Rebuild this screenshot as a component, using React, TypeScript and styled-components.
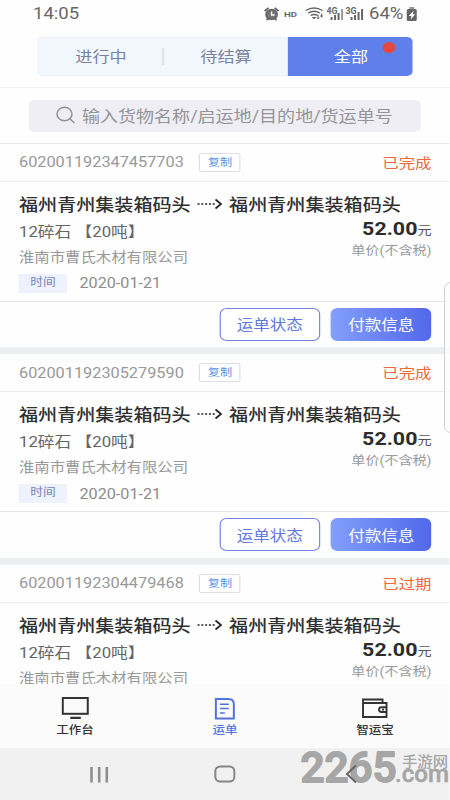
import React from "react";
import styled, { createGlobalStyle } from "styled-components";

const STRETCH = 1.156;
const x = (px: number) => `${(px / STRETCH).toFixed(3)}px`;

const Global = createGlobalStyle`
  *, *::before, *::after { box-sizing: border-box; }
  html, body { margin: 0; padding: 0; background: #fff; overflow: hidden; }
  body { font-family: Roboto, "Noto Sans CJK SC", sans-serif; color: #333; }
`;

const Frame = styled.div`
  position: relative;
  width: 450px;
  height: 800px;
  overflow: hidden;
  background: #fefefe;
`;

const Screen = styled.div`
  width: ${x(450)};
  height: 800px;
  display: flex;
  flex-direction: column;
  transform: scaleX(${STRETCH});
  transform-origin: 0 0;
  white-space: nowrap;
`;

const StatusBar = styled.header`
  height: 27px;
  flex: none;
  display: flex;
  justify-content: space-between;
  align-items: center;
  padding: 0 ${x(32)} 0 ${x(33)};
  font-size: 16px;
  line-height: 28px;
  color: #666;
`;

const StatusIcons = styled.div`
  display: flex;
  align-items: center;
  height: 27px;
`;

const Percent = styled.span`
  width: ${x(37)};
  margin-left: ${x(3)};
`;

const TabArea = styled.div`
  height: 61px;
  flex: none;
  padding: 10px ${x(37.5)} 0;
  border-bottom: 1px solid #eeeff1;
`;

const Tabs = styled.nav`
  display: flex;
  height: 39px;
  border-radius: 5px;
  overflow: hidden;
  background: #f2f7fe;
`;

const Tab = styled.button<{ $active?: boolean; $divided?: boolean }>`
  position: relative;
  flex: 1;
  padding: 0 0 2px ${x(2)};
  border: ${(p) => (p.$active ? "0" : "1px solid #ebf0fa")};
  border-width: ${(p) => (p.$active ? "0" : "1px 0")};
  background: ${(p) => (p.$active ? "#5f80ea" : "transparent")};
  color: ${(p) => (p.$active ? "#fff" : "#7b819b")};
  font: inherit;
  font-size: 14.8px;
  &::after {
    content: "";
    display: ${(p) => (p.$divided ? "block" : "none")};
    position: absolute;
    right: -1px;
    top: 10px;
    width: 1.5px;
    height: 17px;
    background: #dfe3ea;
  }
`;

const Dot = styled.i`
  position: absolute;
  top: 5px;
  right: ${x(17.5)};
  width: 11px;
  height: 11px;
  border-radius: 50%;
  background: #e5483f;
`;

const SearchArea = styled.div`
  height: 55.5px;
  flex: none;
  padding: 11.5px ${x(29)} 0;
  border-bottom: 1px solid #e3e9ee;
`;

const SearchBox = styled.div`
  height: 32.5px;
  border-radius: 5px;
  background: #efeef4;
  display: flex;
  align-items: center;
  padding: 0 0 1px ${x(27)};
  gap: ${x(6)};
  color: #949499;
  font-size: 15.6px;
`;

const List = styled.main`
  height: 540.5px;
  flex: none;
  overflow: hidden;
`;

const Card = styled.article`
  height: 210.5px;
  border-bottom: 7px solid #eceff2;
`;

const CardHead = styled.div`
  height: 38px;
  border-bottom: 1.5px solid #ebebed;
  display: flex;
  align-items: center;
  padding: 0 ${x(18.5)} 0 ${x(19)};
`;

const OrderNo = styled.span`
  width: ${x(180)};
  font-size: 14.1px;
  color: #999;
`;

const CopyButton = styled.button`
  width: ${x(42)};
  height: 19px;
  padding: 0;
  border: 1px solid #dddfe4;
  border-radius: 2px;
  background: #fff;
  color: #5790e8;
  font: inherit;
  font-size: 10.5px;
  line-height: 17px;
`;

const OrderState = styled.span`
  margin-left: auto;
  padding-bottom: 1px;
  font-size: 14.2px;
  color: #eb6b3d;
`;

const CardBody = styled.div`
  height: 120px;
  padding: 11px ${x(18.5)} 0 ${x(19)};
  border-bottom: 1px solid #e7e7ea;
`;

const Route = styled.div`
  height: 24px;
  padding-bottom: 2px;
  display: flex;
  align-items: center;
  font-size: 16.5px;
  font-weight: 500;
  color: #303030;
`;

const RouteArrow = styled.svg`
  margin: 0 ${x(6.5)} 0 ${x(6)};
  flex: none;
`;

const Columns = styled.div`
  display: flex;
  justify-content: space-between;
`;

const Details = styled.div`
  display: flex;
  flex-direction: column;
`;

const Goods = styled.div`
  height: 30px;
  line-height: 32px;
  font-size: 14.5px;
  color: #666;
`;

const Company = styled.div`
  height: 25px;
  line-height: 22px;
  font-size: 13.3px;
  color: #999;
`;

const TimeRow = styled.div`
  height: 23px;
  display: flex;
  align-items: center;
  font-size: 14px;
  color: #8d8d8d;
`;

const TimeTag = styled.span`
  width: ${x(48)};
  height: 19px;
  margin-right: ${x(12.5)};
  background: #eef2fd;
  color: #7784b4;
  font-size: 11px;
  line-height: 18px;
  text-align: center;
`;

const Pricing = styled.div`
  text-align: right;
`;

const Price = styled.div`
  height: 24px;
  line-height: 25px;
  font-size: 12.2px;
  color: #555;
  b {
    font-size: 18.5px;
    color: #2c2c2c;
  }
`;

const PriceNote = styled.div`
  height: 20px;
  line-height: 20px;
  font-size: 12.2px;
  color: #999;
`;

const Actions = styled.footer`
  height: 45.5px;
  display: flex;
  justify-content: flex-end;
  gap: ${x(11)};
  padding: 6px ${x(18.5)} 0;
`;

const Action = styled.button<{ $primary?: boolean }>`
  width: ${x(100.5)};
  height: 33px;
  padding: 0 0 1px;
  border: ${(p) => (p.$primary ? "0" : "1.4px solid #7385df")};
  border-radius: 6px;
  background: ${(p) => (p.$primary ? "linear-gradient(90deg, #839ffb, #5268ea)" : "#fff")};
  color: ${(p) => (p.$primary ? "#fff" : "#6377dc")};
  font: inherit;
  font-size: 14.3px;
`;

const BottomNav = styled.nav`
  height: 64px;
  flex: none;
  display: grid;
  grid-template-columns: repeat(3, 1fr);
  background: #fbfbfb;
`;

const NavItem = styled.div<{ $active?: boolean }>`
  display: flex;
  flex-direction: column;
  align-items: center;
  padding-top: 12px;
  font-size: 10.8px;
  line-height: 20px;
  font-weight: 500;
  color: ${(p) => (p.$active ? "#5570df" : "#333")};
  svg {
    height: 25px;
    flex: none;
  }
`;

const SystemBar = styled.div`
  height: 52px;
  flex: none;
  background: #f1f1f1;
  display: grid;
  grid-template-columns: ${x(198)} ${x(54)} ${x(198)};
  justify-items: center;
  align-items: center;
`;

const SideHandle = styled.div`
  position: absolute;
  left: 443.5px;
  top: 282px;
  width: 20px;
  height: 151px;
  border: 1.5px solid #d0d0d0;
  border-radius: 7px;
  background: rgba(252, 252, 252, 0.75);
`;

const Watermark = styled.svg`
  position: absolute;
  left: 295px;
  top: 744px;
`;

const stretched = { preserveAspectRatio: "none", fill: "none" } as const;

const StatusGlyphs = () => (
  <svg {...stretched} width={x(102)} height="18" viewBox="264 4 102 18" stroke="#666">
    <ellipse cx="272" cy="13.4" rx="5.4" ry="4.600" fill="#777" strokeWidth="2" />
    <path d="M265 10l4-3M279 10l-4-3M267 19l2-2M277 19l-2-2" strokeWidth="1.8" />
    <path d="M272 10.5v3.5h3" stroke="#fff" strokeWidth="1.3" />
    <text x="284.5" y="15.800" fontSize="8" fontWeight="700" textLength="13" lengthAdjust="spacingAndGlyphs" fill="#666" stroke="none">HD</text>
    <path d="M306 9.5q8.5-5 17 0M308.5 12q6-3.5 12 0M311 14.500q3.500-2 7 0" strokeWidth="1.4" />
    <path d="M313 16.500h3l-1.500 1.500zM318.500 13.500v4.500M317 16.500l1.500 1.500 1.500-1.500M322 12.500v4M320.500 15h3" strokeWidth="1" />
    <text x="327" y="12.800" fontSize="8.500" fontWeight="700" textLength="11" lengthAdjust="spacingAndGlyphs" fill="#666" stroke="none">4G</text>
    <text x="346" y="12.800" fontSize="8.500" fontWeight="700" textLength="11" lengthAdjust="spacingAndGlyphs" fill="#666" stroke="none">3G</text>
    <path d="M332 19v-3M335.500 19v-5M339 19v-7M352 19v-3M355.500 19v-5M359 19v-8M362.500 19V8" strokeWidth="2" />
    <path d="M342.500 19V8" stroke="#999" strokeWidth="2" />
  </svg>
);

const BatteryGlyph = () => (
  <svg {...stretched} width={x(12)} height="14" viewBox="0 0 12 14">
    <path d="M3.500 0h5v2h-5z" fill="#999" />
    <rect x="1" y="2" width="10" height="12" rx="1.500" fill="#666" />
    <path d="M8 3.500L3 9h2.600l-.6 3.500 4.500-5.200H7z" fill="#fff" />
  </svg>
);

const SearchGlyph = () => (
  <svg {...stretched} width={x(20)} height="18" viewBox="0 0 20 18" stroke="#919196" strokeWidth="1.500">
    <ellipse cx="9" cy="8" rx="7.500" ry="6.800" />
    <path d="M14.300 12.800L19 17" />
  </svg>
);

const MonitorGlyph = () => (
  <svg {...stretched} width={x(28)} height="25" viewBox="0 0 28 25">
    <rect x="1.500" y="2" width="25" height="15.800" stroke="#333" strokeWidth="2" />
    <path d="M9 21.900h10.500" stroke="#333" strokeWidth="2.200" />
  </svg>
);

const WaybillGlyph = () => (
  <svg {...stretched} width={x(22)} height="25" viewBox="0 0 22 25" stroke="#5570df">
    <path d="M2 3h12.500q5.500 0 5.500 5v14.500H2z" strokeWidth="2" />
    <path d="M6 8.300h9M6 12.500h9M6 17h5" strokeWidth="1.600" />
  </svg>
);

const WalletGlyph = () => (
  <svg {...stretched} width={x(26)} height="25" viewBox="0.8 0 26 25" stroke="#333" strokeWidth="1.900">
    <path d="M21.500 6.500V3.500H2V21h23.500V7H2" />
    <path d="M25.500 11.200h-5q-2.500 0-2.500 2.400t2.500 2.400h5M21 13.600h2" />
  </svg>
);

const RecentsGlyph = () => (
  <svg {...stretched} width={x(20)} height="17" viewBox="0 0 20 17" stroke="#8e8e8e" strokeWidth="2.600">
    <path d="M2.500 1v15.500M10.200 1v15.500M17.800 1v15.500" />
  </svg>
);

const HomeGlyph = () => (
  <svg {...stretched} width={x(22)} height="18" viewBox="0 0 22 18">
    <rect x="1.500" y="1.500" width="19" height="15" rx="5" ry="4.500" stroke="#858585" strokeWidth="2" />
  </svg>
);

const orders = [
  { no: "602001192347457703", state: "已完成" },
  { no: "602001192305279590", state: "已完成" },
  { no: "602001192304479468", state: "已过期" },
];

const OrderCard = ({ no, state }: { no: string; state: string }) => (
  <Card>
    <CardHead>
      <OrderNo>{no}</OrderNo>
      <CopyButton>复制</CopyButton>
      <OrderState>{state}</OrderState>
    </CardHead>
    <CardBody>
      <Route>
        <span>福州青州集装箱码头</span>
        <RouteArrow {...stretched} width={x(26)} height="12" viewBox="0 0 26 12" stroke="#222">
          <path d="M1 6h19" strokeWidth="1.500" strokeDasharray="2 1.800" />
          <path d="M19 1.500L24.500 6 19 10.500" strokeWidth="1.700" />
        </RouteArrow>
        <span>福州青州集装箱码头</span>
      </Route>
      <Columns>
        <Details>
          <Goods>12碎石 【20吨】</Goods>
          <Company>淮南市曹氏木材有限公司</Company>
          <TimeRow>
            <TimeTag>时间</TimeTag>
            <span>2020-01-21</span>
          </TimeRow>
        </Details>
        <Pricing>
          <Price><b>52.00</b>元</Price>
          <PriceNote>单价(不含税)</PriceNote>
        </Pricing>
      </Columns>
    </CardBody>
    <Actions>
      <Action>运单状态</Action>
      <Action $primary>付款信息</Action>
    </Actions>
  </Card>
);

export default function App() {
  return (
    <Frame>
      <Global />
      <Screen>
        <StatusBar>
          <span>14:05</span>
          <StatusIcons>
            <StatusGlyphs />
            <Percent>64%</Percent>
            <BatteryGlyph />
          </StatusIcons>
        </StatusBar>
        <TabArea>
          <Tabs>
            <Tab $divided>进行中</Tab>
            <Tab>待结算</Tab>
            <Tab $active>全部<Dot /></Tab>
          </Tabs>
        </TabArea>
        <SearchArea>
          <SearchBox>
            <SearchGlyph />
            <span>输入货物名称/启运地/目的地/货运单号</span>
          </SearchBox>
        </SearchArea>
        <List>
          {orders.map((order) => <OrderCard key={order.no} {...order} />)}
        </List>
        <BottomNav>
          <NavItem><MonitorGlyph />工作台</NavItem>
          <NavItem $active><WaybillGlyph />运单</NavItem>
          <NavItem><WalletGlyph />智运宝</NavItem>
        </BottomNav>
        <SystemBar>
          <RecentsGlyph />
          <HomeGlyph />
        </SystemBar>
      </Screen>
      <SideHandle />
      <Watermark width="155" height="56" viewBox="295 744 155 56" fill="#a6a6a6">
        <text x="300.5" y="782" fontFamily="Roboto" fontSize="42" fontWeight="500" textLength="96" lengthAdjust="spacingAndGlyphs" stroke="#a6a6a6" strokeWidth="1.800" strokeLinejoin="round">2265</text>
        <text x="402" y="766.500" fontFamily="Noto Sans CJK SC" fontSize="14.500" fontWeight="500" textLength="46" lengthAdjust="spacingAndGlyphs">手游网</text>
        <text x="395" y="782" fontFamily="Roboto" fontSize="23.500" fontWeight="500" textLength="54" lengthAdjust="spacingAndGlyphs" stroke="#a6a6a6" strokeWidth="0.500" strokeLinejoin="round">.com</text>
        <path d="M356 765.500L347 774l9 8.500" fill="none" stroke="#666" strokeWidth="2" />
      </Watermark>
    </Frame>
  );
}
